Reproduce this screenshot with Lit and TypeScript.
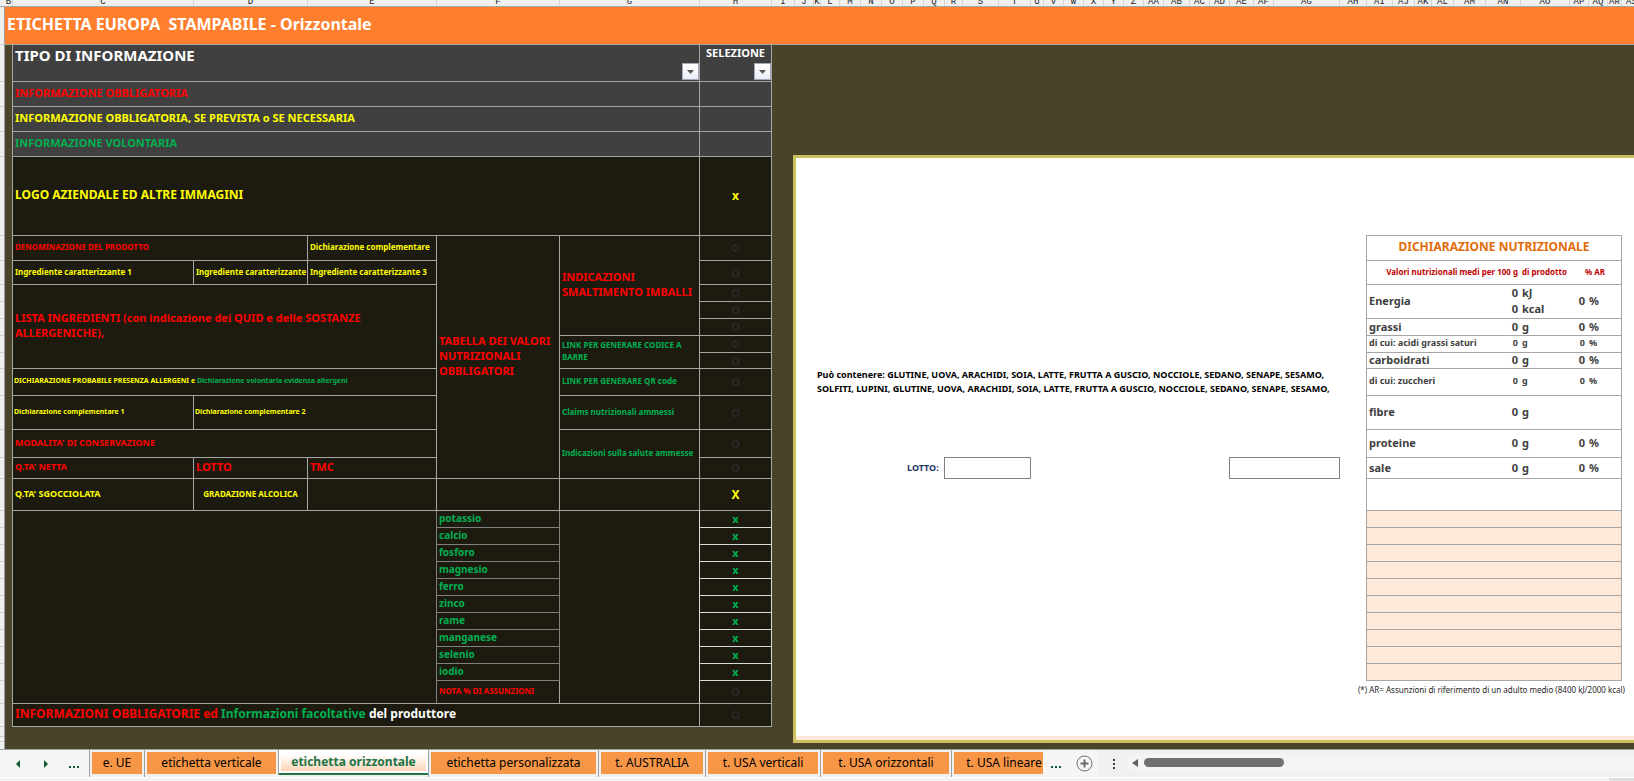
import { LitElement, html, css, svg, nothing } from "lit";
import { customElement, state } from "lit/decorators.js";
import { styleMap } from "lit/directives/style-map.js";
import { classMap } from "lit/directives/class-map.js";

const COLUMNS: [string, number][] = [
  ["B", 8], ["C", 181], ["D", 114], ["E", 129], ["F", 123], ["G", 140], ["H", 72],
  ["I", 23], ["J", 19], ["K", 7], ["L", 19], ["M", 21], ["N", 21], ["O", 21], ["P", 21],
  ["Q", 21], ["R", 18], ["S", 36], ["T", 32], ["U", 13], ["V", 20], ["W", 20], ["X", 20],
  ["Y", 20], ["Z", 20], ["AA", 20], ["AB", 26], ["AC", 20], ["AD", 20], ["AE", 24],
  ["AF", 20], ["AG", 66], ["AH", 27], ["AI", 26], ["AJ", 22], ["AK", 17], ["AL", 22],
  ["AM", 32], ["AN", 35], ["AO", 49], ["AP", 19], ["AQ", 19], ["AR", 14], ["AS", 20],
];

interface Cell {
  text?: unknown;
  cls?: string;
  cols?: number;
  rows?: number;
}
interface Row {
  height: number;
  cells: Cell[];
}

const off: Cell = { text: "O", cls: "mark off" };
const band = (text: string, color: string): Row => ({
  height: 25,
  cells: [{ text, cls: `band s11 ${color}`, cols: 5 }, { cls: "band" }],
});

const MINERALS = ["potassio", "calcio", "fosforo", "magnesio", "ferro", "zinco", "rame", "manganese", "selenio", "iodio"];

const ROWS: Row[] = [
  band("INFORMAZIONE OBBLIGATORIA", "red"),
  band("INFORMAZIONE OBBLIGATORIA, SE PREVISTA o SE NECESSARIA", "yellow"),
  band("INFORMAZIONE VOLONTARIA", "green"),
  { height: 79, cells: [{ text: "LOGO AZIENDALE ED ALTRE IMMAGINI", cls: "s12 yellow", cols: 5 }, { text: "x", cls: "mark yellow" }] },
  {
    height: 25,
    cells: [
      { text: "DENOMINAZIONE DEL PRODOTTO", cls: "s8 red", cols: 2 },
      { text: "Dichiarazione complementare", cls: "s8 yellow" },
      { text: html`TABELLA DEI VALORI<br />NUTRIZIONALI<br />OBBLIGATORI`, cls: "s11 red", rows: 11 },
      { text: html`INDICAZIONI<br />SMALTIMENTO IMBALLI`, cls: "s11 red", rows: 5 },
      off,
    ],
  },
  {
    height: 24,
    cells: [
      { text: "Ingrediente caratterizzante 1", cls: "s8 yellow" },
      { text: "Ingrediente caratterizzante", cls: "s8 yellow" },
      { text: "Ingrediente caratterizzante 3", cls: "s8 yellow" },
      off,
    ],
  },
  {
    height: 17,
    cells: [
      { text: html`LISTA INGREDIENTI (con indicazione dei QUID e delle SOSTANZE<br />ALLERGENICHE),`, cls: "s11 red", cols: 3, rows: 5 },
      off,
    ],
  },
  { height: 17, cells: [off] },
  { height: 17, cells: [off] },
  { height: 17, cells: [{ text: html`LINK PER GENERARE CODICE A<br />BARRE`, cls: "s8 green", rows: 2 }, off] },
  { height: 16, cells: [off] },
  {
    height: 27,
    cells: [
      {
        text: html`DICHIARAZIONE PROBABILE PRESENZA ALLERGENI e <span class="green">Dichiarazione volontaria evidenza allergeni</span>`,
        cls: "s7 yellow",
        cols: 3,
      },
      { text: "LINK PER GENERARE QR code", cls: "s8 green" },
      off,
    ],
  },
  {
    height: 34,
    cells: [
      { text: "Dichiarazione complementare 1", cls: "s7 yellow" },
      { text: "Dichiarazione complementare 2", cls: "s7 yellow", cols: 2 },
      { text: "Claims nutrizionali ammessi", cls: "s8 green" },
      off,
    ],
  },
  {
    height: 28,
    cells: [
      { text: "MODALITA' DI CONSERVAZIONE", cls: "s9 red", cols: 3 },
      { text: "Indicazioni sulla salute ammesse", cls: "s8 green", rows: 2 },
      off,
    ],
  },
  {
    height: 21,
    cells: [{ text: "Q.TA' NETTA", cls: "s9 red" }, { text: "LOTTO", cls: "s11 red" }, { text: "TMC", cls: "s11 red" }, off],
  },
  {
    height: 32,
    cells: [
      { text: "Q.TA' SGOCCIOLATA", cls: "s9 yellow" },
      { text: "GRADAZIONE ALCOLICA", cls: "s8 yellow center" },
      {}, {}, {},
      { text: "X", cls: "mark yellow" },
    ],
  },
  ...MINERALS.map((name, i): Row => {
    const mineral: Cell = { text: name, cls: "s10 green mineral" };
    const check: Cell = { text: "x", cls: "mark green check" };
    return {
      height: 17,
      cells: i === 0 ? [{ cols: 3, rows: 11, cls: "soft" }, mineral, { rows: 11, cls: "bright" }, check] : [mineral, check],
    };
  }),
  { height: 23, cells: [{ text: "NOTA % DI ASSUNZIONI", cls: "s8 red" }, off] },
  {
    height: 23,
    cells: [
      {
        text: html`INFORMAZIONI OBBLIGATORIE ed <span class="green">Informazioni facoltative</span> <span class="white">del produttore</span>`,
        cls: "s12 red",
        cols: 5,
      },
      off,
    ],
  },
];

const COL_WIDTHS = [181, 114, 129, 123, 140, 72];

@customElement("selection-table")
export class SelectionTable extends LitElement {
  static styles = css`
    :host { display: block; }
    table {
      width: 760px;
      table-layout: fixed;
      border-collapse: separate;
      border-spacing: 0;
      border-left: 1px solid #a6a6a6;
      background: #1d1b10;
      color: #fff;
      font-weight: 700;
    }
    th, td {
      box-sizing: border-box;
      padding: 0 0 2px 2px;
      border: 0 solid #a6a6a6;
      border-width: 0 1px 1px 0;
      text-align: left;
      vertical-align: middle;
      white-space: nowrap;
      overflow: hidden;
    }
    .band, th { background: #404040; }
    th { padding-bottom: 0; }
    .s7 { font-size: 7px; line-height: 10px; padding-left: 1px; }
    .s8 { font-size: 8px; line-height: 12px; }
    .s9 { font-size: 9px; line-height: 12px; }
    .s10 { font-size: 10px; line-height: 12px; }
    .s11 { font-size: 11px; line-height: 15px; padding-bottom: 4px; }
    .s12 { font-size: 12px; line-height: 16px; }
    .red { color: #f00; }
    .yellow { color: #ff0; }
    .green { color: #00b050; }
    .white { color: #fff; }
    .center { text-align: center; padding-left: 0; }
    .mark { text-align: center; padding: 0; font-size: 12px; line-height: 14px; }
    .off { color: #292929; font-size: 11px; }
    .mineral { border-color: #808080; }
    .soft { border-right-color: #808080; }
    .bright { border-right-color: #d9d9d9; }
    .check { border-color: #d9d9d9; font-size: 11px; }
    .head { display: grid; height: 35px; padding-bottom: 1px; }
    .head > * { grid-area: 1 / 1; }
    .head-title { font-size: 15px; line-height: 20px; }
    .head-select { font-size: 11px; line-height: 16px; text-align: center; }
    .select { padding: 0; }
    button {
      align-self: end;
      justify-self: end;
      display: flex;
      align-items: center;
      justify-content: center;
      width: 17px;
      height: 17px;
      padding: 0;
      border: 1px solid #a3a9b8;
      background: linear-gradient(#fff, #eaeff7);
    }
  `;

  private filter(label: string) {
    return html`<button aria-label=${label}>
      <svg width="7" height="4" viewBox="0 0 7 4"><path d="M0 0h7L3.500 4z" fill="#595959" /></svg>
    </button>`;
  }

  render() {
    return html`<table>
      <colgroup>${COL_WIDTHS.map((w) => html`<col style=${styleMap({ width: `${w}px` })} />`)}</colgroup>
      <thead>
        <tr>
          <th colspan="5"><div class="head"><span class="head-title">TIPO DI INFORMAZIONE</span>${this.filter("Filtra tipo")}</div></th>
          <th class="select"><div class="head"><span class="head-select">SELEZIONE</span>${this.filter("Filtra selezione")}</div></th>
        </tr>
      </thead>
      <tbody>
        ${ROWS.map(
          (row) => html`<tr style=${styleMap({ height: `${row.height}px` })}>
            ${row.cells.map(
              (c) => html`<td class=${c.cls ?? nothing} colspan=${c.cols ?? 1} rowspan=${c.rows ?? 1}>${c.text ?? nothing}</td>`
            )}
          </tr>`
        )}
      </tbody>
    </table>`;
  }
}

interface Nutrient {
  name: string;
  height: number;
  units: string[];
  ar: boolean;
  minor?: boolean;
}
const NUTRIENTS: Nutrient[] = [
  { name: "Energia", height: 34, units: ["kJ", "kcal"], ar: true },
  { name: "grassi", height: 17, units: ["g"], ar: true },
  { name: "di cui: acidi grassi saturi", height: 17, units: ["g"], ar: true, minor: true },
  { name: "carboidrati", height: 16, units: ["g"], ar: true },
  { name: "di cui: zuccheri", height: 27, units: ["g"], ar: true, minor: true },
  { name: "fibre", height: 34, units: ["g"], ar: false },
  { name: "proteine", height: 28, units: ["g"], ar: true },
  { name: "sale", height: 21, units: ["g"], ar: true },
];

@customElement("label-preview")
export class LabelPreview extends LitElement {
  static styles = css`
    :host {
      display: flex;
      flex-direction: column;
      box-sizing: border-box;
      background: #fff;
      border: 3px solid #ccbf5f;
      border-right: 0;
      color: #000;
    }
    .content { display: flex; flex: 1; gap: 17px; padding: 77px 8px 0 21px; }
    .foot { height: 4px; background: #fde9d9; }
    .text { flex: 1; min-width: 0; padding-top: 133px; }
    .allergens { margin: 0; font-size: 9px; line-height: 14px; font-weight: 700; white-space: nowrap; }
    .lot { display: flex; align-items: center; margin-top: 61px; padding-left: 90px; }
    .lot label { font-size: 9px; line-height: 14px; font-weight: 700; color: #1f3864; margin-right: 5px; }
    input {
      box-sizing: border-box;
      height: 22px;
      border: 1px solid #808080;
      background: #fff;
      padding: 0 4px;
      font: inherit;
      font-size: 9px;
    }
    .lot-code { width: 87px; }
    .lot-date { width: 111px; margin-left: auto; }
    .nutrition { width: 269px; }
    table {
      width: 256px;
      margin-left: 9px;
      box-sizing: border-box;
      table-layout: fixed;
      border-collapse: separate;
      border-spacing: 0;
      border: 1px solid #a6a6a6;
      border-bottom: 0;
      color: #404040;
      font-weight: 700;
      font-size: 11px;
      line-height: 13px;
    }
    th, td { box-sizing: border-box; padding: 0 2px 2px; border-bottom: 1px solid #a6a6a6; text-align: left; white-space: nowrap; vertical-align: middle; }
    .title { font-size: 12px; line-height: 16px; color: #e36c0a; text-align: center; }
    .sub th { font-size: 8px; line-height: 12px; color: #c00000; }
    .num, .sub .num { text-align: right; }
    .sub .center { text-align: center; }
    .double { line-height: 16px; padding-bottom: 1px; }
    .minor td { font-size: 9px; line-height: 12px; }
    .extra td { background: #fde9d9; }
    .note { margin: 3px 0 0; font-size: 8px; line-height: 12px; text-align: center; white-space: nowrap; color: #262626; }
  `;

  render() {
    return html`
      <div class="content">
        <div class="text">
          <p class="allergens">
            Può contenere: GLUTINE, UOVA, ARACHIDI, SOIA, LATTE, FRUTTA A GUSCIO, NOCCIOLE, SEDANO, SENAPE, SESAMO,<br />
            SOLFITI, LUPINI, GLUTINE, UOVA, ARACHIDI, SOIA, LATTE, FRUTTA A GUSCIO, NOCCIOLE, SEDANO, SENAPE, SESAMO,
          </p>
          <div class="lot">
            <label for="lot">LOTTO:</label><input id="lot" class="lot-code" type="text" />
            <input class="lot-date" type="text" aria-label="TMC" />
          </div>
        </div>
        <div class="nutrition">
          <table>
            <colgroup>${[110, 43, 49, 18, 34].map((w) => html`<col style=${styleMap({ width: `${w}px` })} />`)}</colgroup>
            <tbody>
              <tr style=${styleMap({ height: "25px" })}><th class="title" colspan="5">DICHIARAZIONE NUTRIZIONALE</th></tr>
              <tr class="sub" style=${styleMap({ height: "24px" })}>
                <th class="num" colspan="2">Valori nutrizionali medi per 100 g</th>
                <th>di prodotto</th>
                <th class="center" colspan="2">% AR</th>
              </tr>
              ${NUTRIENTS.map(
                (n) => html`<tr class=${classMap({ minor: !!n.minor })} style=${styleMap({ height: `${n.height}px` })}>
                  <td>${n.name}</td>
                  <td class=${classMap({ num: true, double: n.units.length > 1 })}>${n.units.map((_, i) => html`${i ? html`<br />` : nothing}0`)}</td>
                  <td class=${classMap({ double: n.units.length > 1 })}>${n.units.map((u, i) => html`${i ? html`<br />` : nothing}${u}`)}</td>
                  <td class="num">${n.ar ? "0" : nothing}</td>
                  <td>${n.ar ? "%" : nothing}</td>
                </tr>`
              )}
              <tr style=${styleMap({ height: "32px" })}><td colspan="5"></td></tr>
              ${MINERALS.map(() => html`<tr class="extra" style=${styleMap({ height: "17px" })}><td colspan="5"></td></tr>`)}
            </tbody>
          </table>
          <p class="note">(*) AR= Assunzioni di riferimento di un adulto medio (8400 kJ/2000 kcal)</p>
        </div>
      </div>
      <div class="foot"></div>
    `;
  }
}

const TABS: [string, number][] = [
  ["e. UE", 50], ["etichetta verticale", 129], ["etichetta orizzontale", 149], ["etichetta personalizzata", 165],
  ["t. AUSTRALIA", 102], ["t. USA verticali", 110], ["t. USA orizzontali", 126], ["t. USA lineare", 100],
];

@customElement("sheet-tabs")
export class SheetTabs extends LitElement {
  @state() private active = 2;

  static styles = css`
    :host { display: block; background: #f0f0f0; border-top: 1px solid #a0a0a0; }
    .bar { display: flex; height: 27px; }
    button { font: inherit; border: 0; padding: 0; background: none; color: #0e5c2f; }
    .nav { display: flex; align-items: center; width: 89px; background: #f5f5f5; }
    .nav button { display: flex; align-items: center; justify-content: center; height: 24px; width: 29px; }
    .nav .first { margin-left: 4px; }
    .tabs { display: flex; width: 954px; overflow: hidden; }
    .slot { display: flex; flex: none; padding: 2px 2px 3px; border-left: 1px solid #a0a0a0; }
    .tab {
      background: #f79646;
      color: #000;
      font-size: 12px;
      line-height: 20px;
      white-space: nowrap;
    }
    .slot.on { padding: 0; border-right: 1px solid #a0a0a0; margin: 0 -1px 2px 0; }
    .on .tab {
      color: #217346;
      font-weight: 700;
      background: linear-gradient(#fff 20%, #fbcfae);
      box-shadow: inset 0 0 0 2px #fff;
      border-bottom: 2px solid #217346;
    }
    .more { display: flex; align-items: center; gap: 14px; width: 56px; padding-left: 8px; box-sizing: border-box; background: #f5f5f5; }
    .more button, .grip { display: flex; align-items: center; }
    .grip { width: 29px; justify-content: center; }
    .scroll {
      display: flex;
      align-items: center;
      flex: 1;
      height: 17px;
      margin: 4px 0 0;
      padding-left: 4px;
      gap: 6px;
      background: #f4f4f4;
      border-radius: 6px 0 0 6px;
    }
    .thumb { width: 140px; height: 9px; border-radius: 5px; background: #707070; }
    .status { height: 3px; background: #f4f4f4; border-top: 1px solid #fff; display: flex; justify-content: flex-end; }
    .zoom { width: 25px; background: #dedede; }
  `;

  private dots() {
    return svg`<svg width="11" height="8" viewBox="0 0 11 8" fill="#0e5c2f"><path d="M0 6h2v2H0zM4 6h2v2H4zM8 6h2v2H8z" /></svg>`;
  }

  render() {
    return html`
      <div class="bar">
        <div class="nav">
          <button class="first" aria-label="Foglio precedente"><svg width="4" height="8" viewBox="0 0 4 8"><path d="M4 0v8L0 4z" fill="#0e5c2f" /></svg></button>
          <button aria-label="Foglio successivo"><svg width="4" height="8" viewBox="0 0 4 8"><path d="M0 0v8l4-4z" fill="#0e5c2f" /></svg></button>
          <button aria-label="Altri fogli">${this.dots()}</button>
        </div>
        <div class="tabs">
          ${TABS.map(
            ([name, width], i) => html`<div class=${classMap({ slot: true, on: i === this.active })}>
              <button class="tab" style=${styleMap({ width: `${width}px` })} @click=${() => (this.active = i)}>${name}</button>
            </div>`
          )}
        </div>
        <div class="more">
          <button aria-label="Fogli successivi">${this.dots()}</button>
          <button aria-label="Nuovo foglio">
            <svg width="17" height="17" viewBox="0 0 17 17" fill="none" stroke="#6b6b6b">
              <circle cx="8.500" cy="8.500" r="7.500" /><path d="M8.500 4.500v8M4.500 8.500h8" stroke-width="2" />
            </svg>
          </button>
        </div>
        <div class="grip"><svg width="2" height="10" viewBox="0 0 2 10" fill="#404040"><path d="M0 0h2v2H0zM0 4h2v2H0zM0 8h2v2H0z" /></svg></div>
        <div class="scroll">
          <svg width="6" height="8" viewBox="0 0 6 8"><path d="M6 0v8L0 4z" fill="#606060" /></svg>
          <div class="thumb"></div>
        </div>
      </div>
      <div class="status"><div class="zoom"></div></div>
    `;
  }
}

@customElement("app-root")
export class AppRoot extends LitElement {
  static styles = css`
    :host {
      display: flex;
      flex-direction: column;
      min-height: 100vh;
      overflow: hidden;
      background: #494429;
      font-family: "Noto Sans", sans-serif;
    }
    .columns {
      display: flex;
      height: 6px;
      overflow: hidden;
      padding-left: 5px;
      background: #f0f0f0;
      border-bottom: 1px solid #a6a6a6;
    }
    .column {
      box-sizing: border-box;
      flex: none;
      display: flex;
      align-items: flex-end;
      justify-content: center;
      border-right: 1px solid #d4d4d4;
      color: #222;
      font-family: "Liberation Mono", monospace;
      font-size: 9px;
      line-height: 8px;
      overflow: hidden;
    }
    .sheet { display: flex; flex: 1; }
    .numbers { box-sizing: border-box; width: 5px; background: #f0f0f0; border-right: 1px solid #a0a0a0; }
    .number { box-sizing: border-box; border-bottom: 1px solid #d0d0d0; }
    .grid { display: flex; flex-direction: column; flex: 1; min-width: 0; }
    h1 {
      margin: 0;
      padding: 0 2px 2px;
      font-size: 16px;
      line-height: 35px;
      color: #fff;
      background: #ff7f2e;
      border-bottom: 1px solid #a6a6a6;
      white-space: pre;
    }
    .body { display: flex; flex: 1; padding-left: 7px; }
    selection-table { flex: none; padding-bottom: 22px; }
    label-preview { flex: 1; margin: 110px 0 6px 21px; }
  `;

  render() {
    const heights = [38, 37, ...ROWS.map((r) => r.height), 10, 5];
    return html`
      <div class="columns">
        ${COLUMNS.map(([name, width]) => html`<div class="column" style=${styleMap({ width: `${width}px` })}>${name}</div>`)}
      </div>
      <div class="sheet">
        <div class="numbers">${heights.map((h) => html`<div class="number" style=${styleMap({ height: `${h}px` })}></div>`)}</div>
        <div class="grid">
          <h1>ETICHETTA EUROPA  STAMPABILE - Orizzontale</h1>
          <div class="body">
            <selection-table></selection-table>
            <label-preview></label-preview>
          </div>
        </div>
      </div>
      <sheet-tabs></sheet-tabs>
    `;
  }
}
